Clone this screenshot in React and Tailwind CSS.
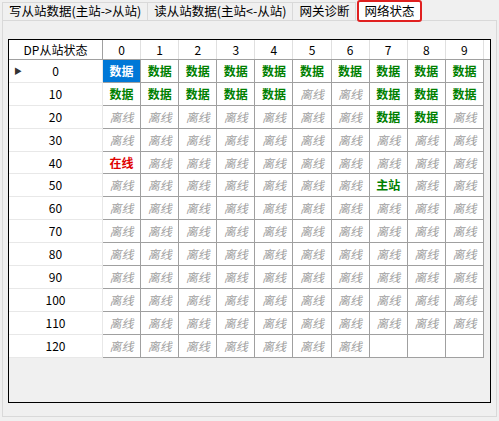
export default function App() {
  const rows = [0,10,20,30,40,50,60,70,80,90,100,110,120];
  const cell = (r, c) => {
    if (r === 0) return c === 0 ? "blue" : "data";
    if (r === 10) return c === 5 || c === 6 ? "off" : "data";
    if (r === 20) return c === 7 || c === 8 ? "data" : "off";
    if (r === 40 && c === 0) return "on";
    if (r === 50 && c === 7) return "master";
    if (r === 120 && c > 6) return "empty";
    return "off";
  };
  const render = (t) => {
    if (t === "blue") return <div className="h-full w-full bg-[#0078d7] text-white font-bold flex items-center justify-center">数据</div>;
    if (t === "data") return <span className="text-[#008000] font-bold">数据</span>;
    if (t === "on") return <span className="text-[#e00000] font-bold">在线</span>;
    if (t === "master") return <span className="text-[#008000] font-bold">主站</span>;
    if (t === "off") return <span className="text-[#a0a0a0] italic">离线</span>;
    return null;
  };
  const cols = "grid grid-cols-[94px_repeat(10,38.1px)_1fr]";
  return (
    <div className="w-[499px] h-[421px] bg-[#f0f0f0] text-[12px] text-black" style={{fontFamily: '"Noto Sans CJK SC", sans-serif'}}>
      <div className="flex h-[20px] items-end pl-[2px] text-[12.5px]">
        <div className="h-[18px] px-[6px] border border-[#d9d9d9] border-b-0 bg-[#f0f0f0] flex items-center">写从站数据(主站-&gt;从站)</div>
        <div className="h-[18px] px-[6px] border border-[#d9d9d9] border-b-0 border-l-0 flex items-center">读从站数据(主站&lt;-从站)</div>
        <div className="h-[18px] px-[6px] border border-[#d9d9d9] border-b-0 border-l-0 flex items-center">网关诊断</div>
        <div className="h-[22px] px-[5px] ml-[1px] bg-white border-2 border-[#e02020] rounded-[3px] flex items-center mb-[-2px] relative">网络状态</div>
      </div>
      <div className="mx-[2px] h-[397px] border border-[#d9d9d9] bg-[#f0f0f0] pt-[18px] px-[5px]">
        <div className="h-[364px] border border-black bg-[#f0f0f0]">
          <div className={`${cols} h-[20px] bg-white border-b border-[#a0a0a0]`}>
            <div className="flex items-center justify-center border-r border-[#a0a0a0]">DP从站状态</div>
            {Array.from({length: 10}, (_, i) => (
              <div key={i} className="flex items-center justify-center border-r border-[#e0e0e0]">{i}</div>
            ))}
            <div />
          </div>
          {rows.map((r, ri) => (
            <div key={r} className={`${cols} h-[22.9px]`}>
              <div className="relative flex items-center justify-center bg-white border-b border-[#e8e8e8] border-r border-[#a0a0a0]">
                {ri === 0 && <span className="absolute left-[5px] text-[8px] text-[#333]">▶</span>}
                {r}
              </div>
              {Array.from({length: 10}, (_, c) => {
                const t = cell(r, c);
                return (
                  <div key={c} className="flex items-center justify-center bg-white border-r border-b border-[#a0a0a0]">
                    {render(t)}
                  </div>
                );
              })}
              <div />
            </div>
          ))}
        </div>
      </div>
    </div>
  );
}
